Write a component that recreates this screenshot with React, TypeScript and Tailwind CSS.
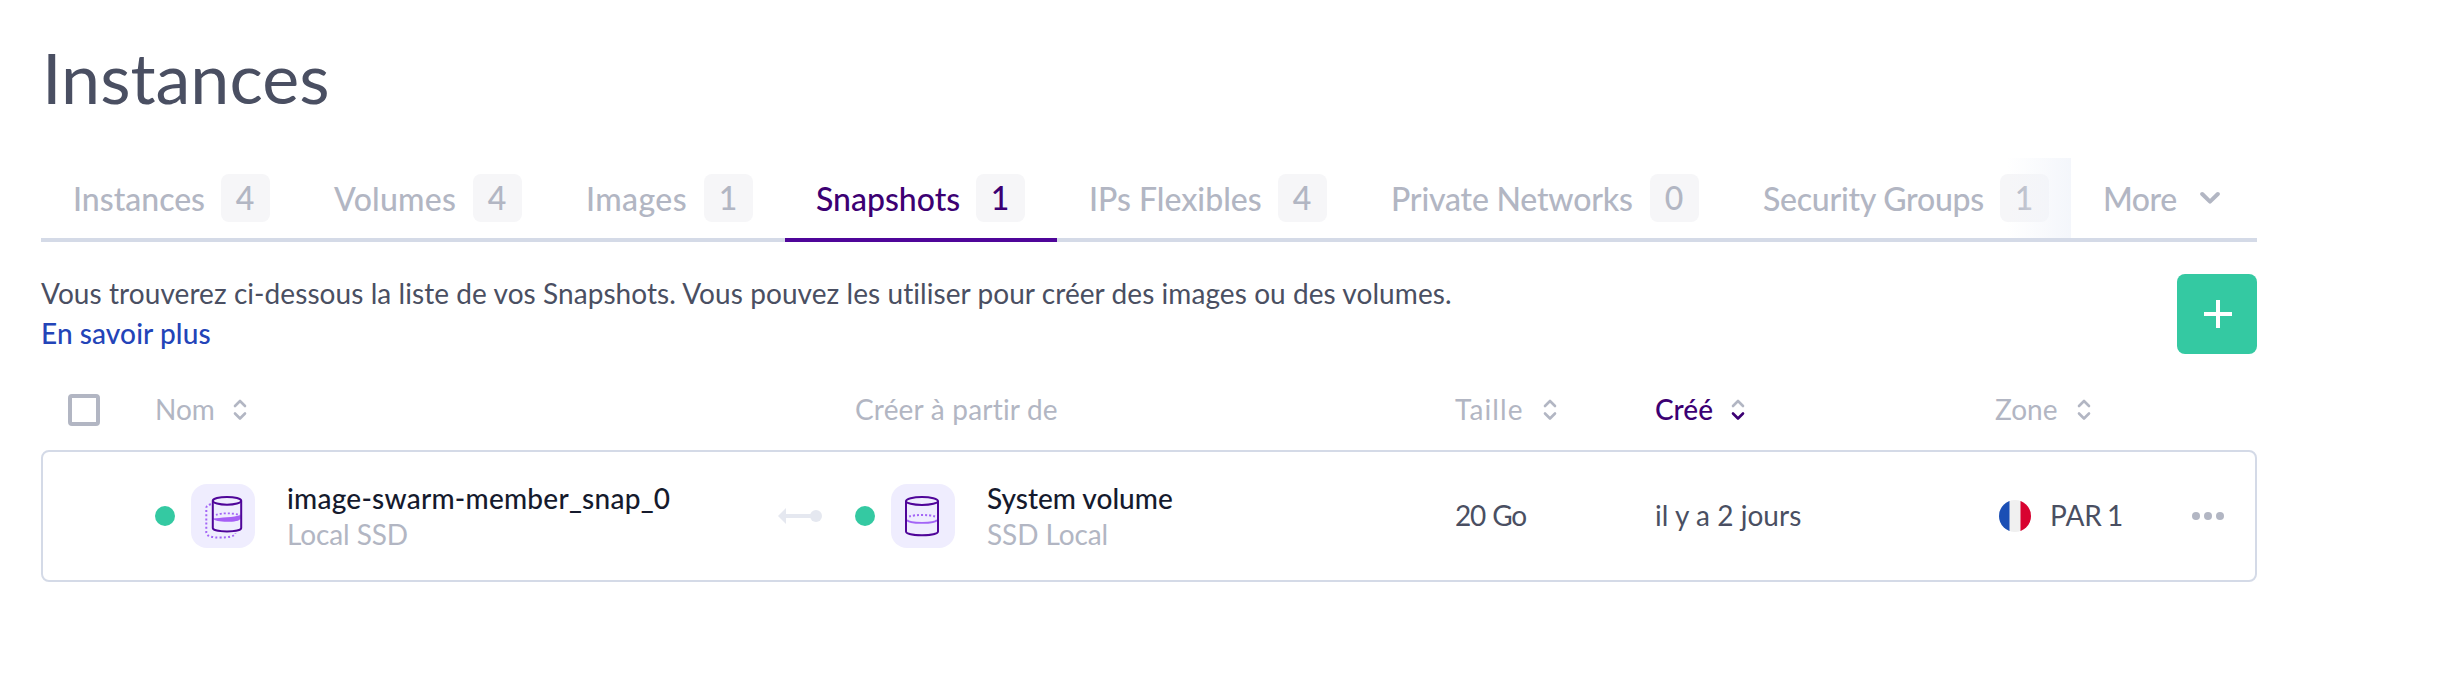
import type { ReactNode } from 'react';

type Tab = { label: string; count: number; tab: string; text: string; active?: boolean };

const tabs: Tab[] = [
  { label: 'Instances', count: 4, tab: 'w-[261px]', text: '' },
  { label: 'Volumes', count: 4, tab: 'w-[252px]', text: 'tracking-[0.25px]' },
  { label: 'Images', count: 1, tab: 'w-[231px]', text: 'tracking-[0.4px]' },
  { label: 'Snapshots', count: 1, tab: 'w-[272px]', text: '-ml-px', active: true },
  { label: 'IPs Flexibles', count: 4, tab: 'w-[302px]', text: '' },
  { label: 'Private Networks', count: 0, tab: 'w-[372px]', text: 'tracking-[-0.2px]' },
  { label: 'Security Groups', count: 1, tab: 'w-[350px]', text: 'tracking-[-0.25px]' },
];

function TabItem({ label, count, tab, text, active }: Tab) {
  return (
    <button
      className={`flex h-[84px] shrink-0 items-center justify-between border-b-4 px-8 text-[32px] leading-[48px] font-medium ${tab} ${
        active ? 'border-[#4f0599] text-[#3c0073]' : 'border-[#d4dae7] text-[#b2b6c3]'
      }`}
    >
      <span className={`pt-px whitespace-nowrap ${text}`}>{label}</span>
      <span className="flex h-12 w-[49px] items-center justify-center rounded-lg bg-[#f6f6f8] pr-px">{count}</span>
    </button>
  );
}

function SortIcon({ down = '#b2b6c3' }: { down?: string }) {
  return (
    <svg width="14" height="22" viewBox="0 0 14 22" fill="none" strokeWidth="2.6" strokeLinecap="round" strokeLinejoin="round">
      <path d="M2 7 7 2l5 5" stroke="#b2b6c3" />
      <path d="M2 14.5l5 5 5-5" stroke={down} />
    </svg>
  );
}

function HeaderCell({ children, className }: { children: ReactNode; className: string }) {
  return <div className={`flex items-center ${className}`}>{children}</div>;
}

function SnapshotIcon() {
  return (
    <svg width="64" height="64" viewBox="0 0 64 64" fill="none">
      <path
        d="M20 20.3C17 20.9 15.3 22 15.3 24V48.5C15.3 52 21 53.6 29 53.6C37 53.6 44 52.5 44.3 49"
        stroke="#a365f6"
        strokeWidth="2"
        strokeDasharray="2 2.2"
      />
      <path d="M22 34.6C29 33.4 43 33.6 49.6 31V34.5C49 37 43 37.8 36 37.8C29 37.8 23 37 22 34.6Z" fill="#a65ff5" />
      <path d="M25 31C30 28.8 42 28.8 49 31" stroke="#a365f6" strokeWidth="1.8" strokeDasharray="2 2" />
      <ellipse cx="36" cy="16.8" rx="14.2" ry="3.9" stroke="#4f0599" strokeWidth="2" />
      <path d="M21.8 16.8V44C21.8 46 28 47.4 36 47.4C44 47.4 50.2 46 50.2 44V16.8" stroke="#4f0599" strokeWidth="2" />
    </svg>
  );
}

function VolumeIcon() {
  return (
    <svg width="64" height="64" viewBox="0 0 64 64" fill="none">
      <path d="M16 36C17 38 23 38.9 31 38.9C39 38.9 45 38 46 36" stroke="#a365f6" strokeWidth="1.8" />
      <path d="M18.2 32.6C24 30.4 38 30.4 44.4 32.6" stroke="#a365f6" strokeWidth="2" strokeDasharray="2 2" />
      <ellipse cx="31" cy="17" rx="16" ry="4" stroke="#4f0599" strokeWidth="2" />
      <path d="M15 17V47.5C15 49.8 22 51.2 31 51.2C40 51.2 47 49.8 47 47.5V17" stroke="#4f0599" strokeWidth="2" />
    </svg>
  );
}

function Resource({ icon, name, detail, nameClass = '' }: { icon: ReactNode; name: string; detail: string; nameClass?: string }) {
  return (
    <div className="flex items-center">
      <span className="size-5 rounded-full bg-[#34c9a2]" />
      <span className="ml-4 size-16 rounded-[16px] bg-[#efedfe]">{icon}</span>
      <div className="ml-8 flex flex-col leading-9 whitespace-nowrap">
        <span className={`font-medium text-[#151a2d] ${nameClass}`}>{name}</span>
        <span className="tracking-[-0.1px] text-[#b2b6c3]">{detail}</span>
      </div>
    </div>
  );
}

export default function App() {
  return (
    <main className="h-[684px] w-[2450px] overflow-hidden bg-white pt-[37px] pl-[41px] font-[Lato,sans-serif] text-[28px] leading-10 text-[#4a4f62] [font-variant-ligatures:none]">
      <div className="w-[2216px]">
        <h1 className="pl-px text-[70px] leading-[80px]">Instances</h1>

        <nav className="mt-[41px] flex">
          <div className="relative flex w-[2030px] overflow-hidden">
            {tabs.map((t) => (
              <TabItem key={t.label} {...t} />
            ))}
            <div className="absolute top-0 right-0 h-20 w-16 bg-linear-to-r from-[#f1f4fa]/0 to-[#f1f4fa]/80" />
          </div>
          <button className="flex h-[84px] flex-1 items-center border-b-4 border-[#d4dae7] pl-8 text-[32px] font-medium text-[#b2b6c3]">
            <span className="w-[97px] pt-px text-left tracking-[-0.5px]">More</span>
            <svg width="20" height="14" viewBox="0 0 20 14" fill="none" stroke="#b2b6c3" strokeWidth="4" strokeLinecap="round" strokeLinejoin="round">
              <path d="M2.2 3 10 10.6 17.8 3" />
            </svg>
          </button>
        </nav>

        <section className="mt-[31px] flex items-start justify-between">
          <div>
            <p className="tracking-[0.07px]">
              Vous trouverez ci-dessous la liste de vos Snapshots. Vous pouvez les utiliser pour créer des images ou des volumes.
            </p>
            <a className="font-medium tracking-[0.1px] text-[#2344b8]">En savoir plus</a>
          </div>
          <button className="mt-px flex size-20 items-center justify-center rounded-lg bg-[#34c9a2]">
            <svg width="28" height="28" viewBox="0 0 28 28" className="ml-[2px]" stroke="#fff" strokeWidth="4">
              <path d="M14 0v28M0 14h28" />
            </svg>
          </button>
        </section>

        <div className="mt-4 flex h-20 items-center text-[#b2b6c3]">
          <div className="w-[114px] pl-[27px]">
            <span className="block size-8 rounded-[4px] border-4 border-[#b2b6c3]" />
          </div>
          <HeaderCell className="w-[700px] gap-[18px]">
            <span className="pb-[3px]">Nom</span>
            <SortIcon />
          </HeaderCell>
          <HeaderCell className="w-[600px]">
            <span className="pb-[3px] tracking-[0.2px]">Créer à partir de</span>
          </HeaderCell>
          <HeaderCell className="w-[200px]">
            <span className="w-[88px] pb-[3px] tracking-[1.1px]">Taille</span>
            <SortIcon />
          </HeaderCell>
          <HeaderCell className="w-[340px] text-[#3c0073]">
            <span className="w-[76px] pb-[3px] font-medium">Créé</span>
            <SortIcon down="#3c0073" />
          </HeaderCell>
          <HeaderCell className="flex-1">
            <span className="w-[82px] pb-[3px]">Zone</span>
            <SortIcon />
          </HeaderCell>
        </div>

        <div className="flex h-[132px] items-center rounded-lg border-2 border-[#d4dae7] pl-[112px]">
          <div className="w-[623px]">
            <Resource icon={<SnapshotIcon />} name="image-swarm-member_snap_0" detail="Local SSD" nameClass="tracking-[0.25px]" />
          </div>
          <div className="w-[77px]">
            <svg width="44" height="16" viewBox="0 0 44 16" fill="#e5e8f0">
              <path d="M0 8 8 0v6h26v4H8v6z" />
              <circle cx="38" cy="8" r="6" />
            </svg>
          </div>
          <div className="w-[600px]">
            <Resource icon={<VolumeIcon />} name="System volume" detail="SSD Local" />
          </div>
          <span className="w-[200px] pb-[3px] tracking-[-1.3px] [word-spacing:1.5px]">20 Go</span>
          <span className="w-[344px] pb-[3px] tracking-[0.05px]">il y a 2 jours</span>
          <svg width="32" height="32" viewBox="0 0 32 32">
            <defs>
              <clipPath id="disc">
                <circle cx="16" cy="16" r="16" />
              </clipPath>
            </defs>
            <g clipPath="url(#disc)">
              <path fill="#f0f0f0" d="M0 0h32v32H0z" />
              <path fill="#1b4fb5" d="M0 0h10.5v32H0z" />
              <path fill="#d80330" d="M21.5 0H32v32H21.5z" />
            </g>
          </svg>
          <span className="ml-[19px] w-[142px] pb-[3px] whitespace-nowrap [word-spacing:-2px]">PAR 1</span>
          <div className="flex gap-1">
            <span className="size-2 rounded-full bg-[#b2b6c3]" />
            <span className="size-2 rounded-full bg-[#b2b6c3]" />
            <span className="size-2 rounded-full bg-[#b2b6c3]" />
          </div>
        </div>
      </div>
    </main>
  );
}
